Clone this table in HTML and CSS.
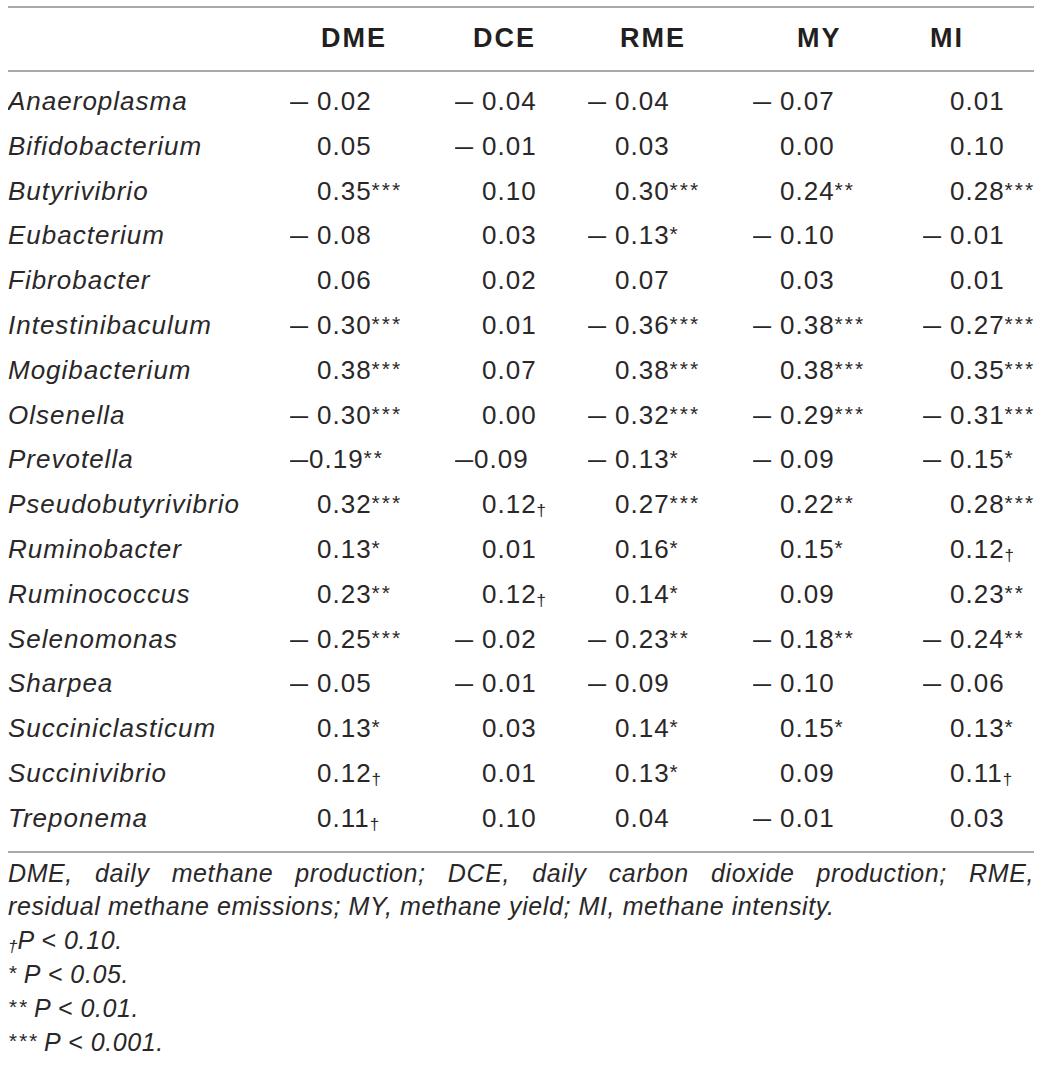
FILE: index.html
```html
<!DOCTYPE html>
<html>
<head>
<meta charset="utf-8">
<link rel="stylesheet" href="styles.css">
</head>
<body>
<div class="tbl">
  <div class="row head">
    <div class="c"></div>
    <div class="c h h1">DME</div>
    <div class="c h h2">DCE</div>
    <div class="c h h3">RME</div>
    <div class="c h h4">MY</div>
    <div class="c h h5">MI</div>
  </div>
  <div class="body">
    <div class="row"><div class="c n">Anaeroplasma</div><div class="c"><span class="m">–</span>0.02</div><div class="c"><span class="m">–</span>0.04</div><div class="c"><span class="m">–</span>0.04</div><div class="c"><span class="m">–</span>0.07</div><div class="c p">0.01</div></div>
    <div class="row"><div class="c n">Bifidobacterium</div><div class="c p">0.05</div><div class="c"><span class="m">–</span>0.01</div><div class="c p">0.03</div><div class="c p">0.00</div><div class="c p">0.10</div></div>
    <div class="row"><div class="c n">Butyrivibrio</div><div class="c p">0.35<span class="s">***</span></div><div class="c p">0.10</div><div class="c p">0.30<span class="s">***</span></div><div class="c p">0.24<span class="s">**</span></div><div class="c p">0.28<span class="s">***</span></div></div>
    <div class="row"><div class="c n">Eubacterium</div><div class="c"><span class="m">–</span>0.08</div><div class="c p">0.03</div><div class="c"><span class="m">–</span>0.13<span class="s">*</span></div><div class="c"><span class="m">–</span>0.10</div><div class="c"><span class="m">–</span>0.01</div></div>
    <div class="row"><div class="c n">Fibrobacter</div><div class="c p">0.06</div><div class="c p">0.02</div><div class="c p">0.07</div><div class="c p">0.03</div><div class="c p">0.01</div></div>
    <div class="row"><div class="c n">Intestinibaculum</div><div class="c"><span class="m">–</span>0.30<span class="s">***</span></div><div class="c p">0.01</div><div class="c"><span class="m">–</span>0.36<span class="s">***</span></div><div class="c"><span class="m">–</span>0.38<span class="s">***</span></div><div class="c"><span class="m">–</span>0.27<span class="s">***</span></div></div>
    <div class="row"><div class="c n">Mogibacterium</div><div class="c p">0.38<span class="s">***</span></div><div class="c p">0.07</div><div class="c p">0.38<span class="s">***</span></div><div class="c p">0.38<span class="s">***</span></div><div class="c p">0.35<span class="s">***</span></div></div>
    <div class="row"><div class="c n">Olsenella</div><div class="c"><span class="m">–</span>0.30<span class="s">***</span></div><div class="c p">0.00</div><div class="c"><span class="m">–</span>0.32<span class="s">***</span></div><div class="c"><span class="m">–</span>0.29<span class="s">***</span></div><div class="c"><span class="m">–</span>0.31<span class="s">***</span></div></div>
    <div class="row"><div class="c n">Prevotella</div><div class="c"><span class="m t">–</span>0.19<span class="s">**</span></div><div class="c"><span class="m t">–</span>0.09</div><div class="c"><span class="m">–</span>0.13<span class="s">*</span></div><div class="c"><span class="m">–</span>0.09</div><div class="c"><span class="m">–</span>0.15<span class="s">*</span></div></div>
    <div class="row"><div class="c n">Pseudobutyrivibrio</div><div class="c p">0.32<span class="s">***</span></div><div class="c p">0.12<span class="d">†</span></div><div class="c p">0.27<span class="s">***</span></div><div class="c p">0.22<span class="s">**</span></div><div class="c p">0.28<span class="s">***</span></div></div>
    <div class="row"><div class="c n">Ruminobacter</div><div class="c p">0.13<span class="s">*</span></div><div class="c p">0.01</div><div class="c p">0.16<span class="s">*</span></div><div class="c p">0.15<span class="s">*</span></div><div class="c p">0.12<span class="d">†</span></div></div>
    <div class="row"><div class="c n">Ruminococcus</div><div class="c p">0.23<span class="s">**</span></div><div class="c p">0.12<span class="d">†</span></div><div class="c p">0.14<span class="s">*</span></div><div class="c p">0.09</div><div class="c p">0.23<span class="s">**</span></div></div>
    <div class="row"><div class="c n">Selenomonas</div><div class="c"><span class="m">–</span>0.25<span class="s">***</span></div><div class="c"><span class="m">–</span>0.02</div><div class="c"><span class="m">–</span>0.23<span class="s">**</span></div><div class="c"><span class="m">–</span>0.18<span class="s">**</span></div><div class="c"><span class="m">–</span>0.24<span class="s">**</span></div></div>
    <div class="row"><div class="c n">Sharpea</div><div class="c"><span class="m">–</span>0.05</div><div class="c"><span class="m">–</span>0.01</div><div class="c"><span class="m">–</span>0.09</div><div class="c"><span class="m">–</span>0.10</div><div class="c"><span class="m">–</span>0.06</div></div>
    <div class="row"><div class="c n">Succiniclasticum</div><div class="c p">0.13<span class="s">*</span></div><div class="c p">0.03</div><div class="c p">0.14<span class="s">*</span></div><div class="c p">0.15<span class="s">*</span></div><div class="c p">0.13<span class="s">*</span></div></div>
    <div class="row"><div class="c n">Succinivibrio</div><div class="c p">0.12<span class="d">†</span></div><div class="c p">0.01</div><div class="c p">0.13<span class="s">*</span></div><div class="c p">0.09</div><div class="c p">0.11<span class="d">†</span></div></div>
    <div class="row"><div class="c n">Treponema</div><div class="c p">0.11<span class="d">†</span></div><div class="c p">0.10</div><div class="c p">0.04</div><div class="c"><span class="m">–</span>0.01</div><div class="c p">0.03</div></div>
  </div>
</div>
<div class="notes">
  <p class="just"><span class="l1">DME, daily methane production; DCE, daily carbon dioxide production; RME,</span> residual methane emissions; MY, methane yield; MI, methane intensity.</p>
  <p><span class="d">†</span>P &lt; 0.10.</p>
  <p><span class="s">*</span> P &lt; 0.05.</p>
  <p><span class="s">**</span> P &lt; 0.01.</p>
  <p><span class="s">***</span> P &lt; 0.001.</p>
</div>
</body>
</html>
```
FILE: styles.css
```css
html, body {
  background: #ffffff;
}
body {
  margin: 6px 8px 0 8px;
  font-family: "Liberation Sans", Arial, sans-serif;
  color: #2a2728;
  width: 1026px;
}
.tbl {
  border-top: 2px solid #a9a9a9;
  border-bottom: 2px solid #a9a9a9;
}
.row {
  display: grid;
  grid-template-columns: 282px 165px 133px 165px 170px 111px;
  font-size: 26px;
  letter-spacing: 1px;
  line-height: 44.8px;
  white-space: nowrap;
}
.head {
  font-size: 27px;
  font-weight: bold;
  letter-spacing: 2px;
  line-height: 60px;
  padding-bottom: 2px;
  border-bottom: 2px solid #a9a9a9;
  color: #231f20;
}
.h1 { padding-left: 31px; }
.h2 { padding-left: 18px; }
.h3 { padding-left: 32px; }
.h4 { padding-left: 44px; }
.h5 { padding-left: 7px; }
.body {
  padding-top: 7px;
  padding-bottom: 10px;
}
.n {
  font-style: italic;
}
.p {
  padding-left: 27px;
}
.m {
  display: inline-block;
  width: 27px;
  letter-spacing: 0;
  transform: scaleX(1.25);
  transform-origin: left center;
}
.m.t {
  width: 19px;
}
.s {
  font-size: 21px;
  letter-spacing: 2px;
  vertical-align: 3px;
  line-height: 0;
}
.d {
  font-size: 17px;
  vertical-align: -3px;
  line-height: 0;
  letter-spacing: 0;
}
.notes {
  font-style: italic;
  font-size: 25px;
  letter-spacing: 0.6px;
  line-height: 33.8px;
  padding-top: 4px;
}
.notes .s {
  margin-right: -2px;
}
.notes p {
  margin: 0;
}
.just {
  text-align: justify;
}
.l1 {
  display: block;
  text-align: justify;
  text-align-last: justify;
}
```
